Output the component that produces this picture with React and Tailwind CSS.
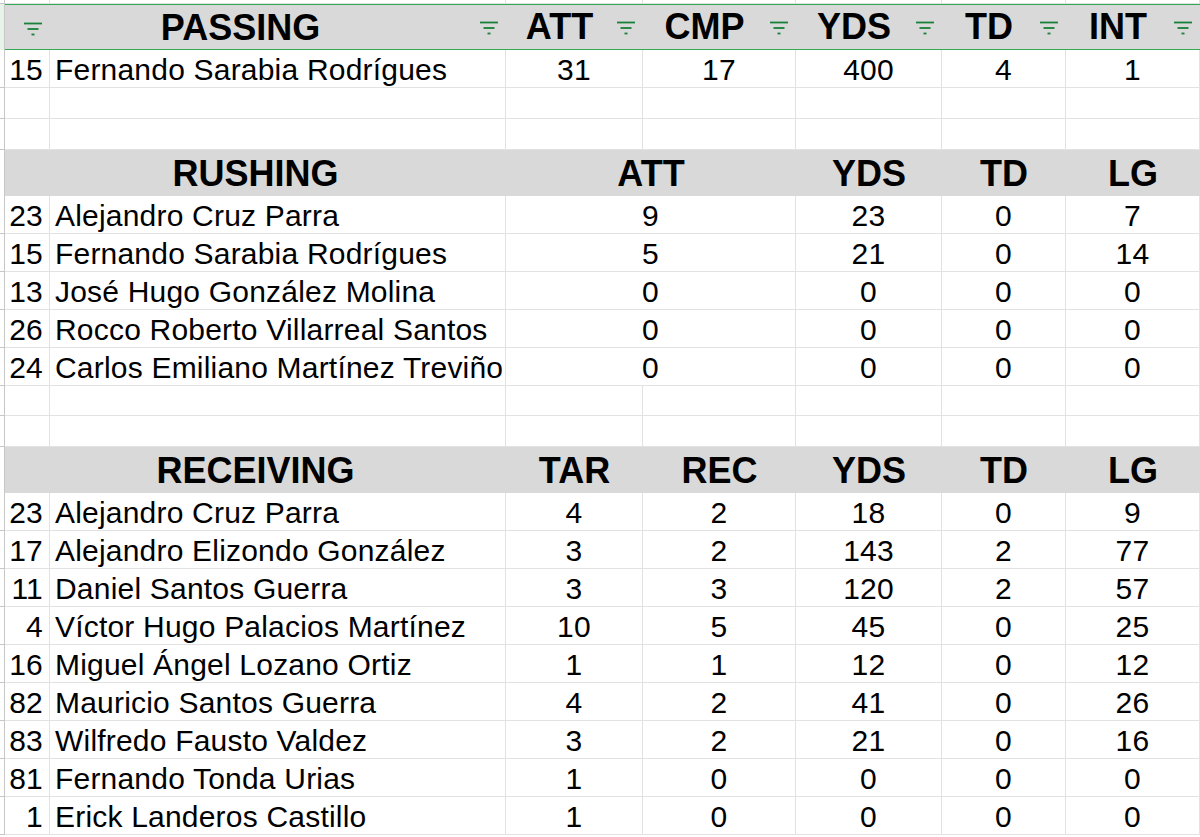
import React from "react";

const grid = "grid grid-cols-[5px_45px_456px_137px_153px_146px_124px_134px]";

const passing = [{ num: 15, name: "Fernando Sarabia Rodrígues", stats: [31, 17, 400, 4, 1] }];

const rushing = [
  { num: 23, name: "Alejandro Cruz Parra", stats: [9, 23, 0, 7] },
  { num: 15, name: "Fernando Sarabia Rodrígues", stats: [5, 21, 0, 14] },
  { num: 13, name: "José Hugo González Molina", stats: [0, 0, 0, 0] },
  { num: 26, name: "Rocco Roberto Villarreal Santos", stats: [0, 0, 0, 0] },
  { num: 24, name: "Carlos Emiliano Martínez Treviño", stats: [0, 0, 0, 0] },
];

const receiving = [
  { num: 23, name: "Alejandro Cruz Parra", stats: [4, 2, 18, 0, 9] },
  { num: 17, name: "Alejandro Elizondo González", stats: [3, 2, 143, 2, 77] },
  { num: 11, name: "Daniel Santos Guerra", stats: [3, 3, 120, 2, 57] },
  { num: 4, name: "Víctor Hugo Palacios Martínez", stats: [10, 5, 45, 0, 25] },
  { num: 16, name: "Miguel Ángel Lozano Ortiz", stats: [1, 1, 12, 0, 12] },
  { num: 82, name: "Mauricio Santos Guerra", stats: [4, 2, 41, 0, 26] },
  { num: 83, name: "Wilfredo Fausto Valdez", stats: [3, 2, 21, 0, 16] },
  { num: 81, name: "Fernando Tonda Urias", stats: [1, 0, 0, 0, 0] },
  { num: 1, name: "Erick Landeros Castillo", stats: [1, 0, 0, 0, 0] },
];

function FilterIcon() {
  return (
    <svg width="20" height="14" viewBox="0 0 20 14" className="shrink-0">
      <line x1="1" y1="1.5" x2="19" y2="1.5" stroke="#188038" strokeWidth="1.8" />
      <line x1="4.5" y1="7" x2="15.5" y2="7" stroke="#188038" strokeWidth="1.8" />
      <line x1="8.5" y1="12.5" x2="11.5" y2="12.5" stroke="#188038" strokeWidth="1.8" />
    </svg>
  );
}

const cell = "border-r border-b border-[#e2e2e2]";
const stub = "border-r border-b border-[#c7c7c7]";

function BlankRow({ h = "h-[31px]" }) {
  return (
    <div className={`${grid} ${h}`}>
      <div className={stub} />
      <div className={cell} />
      <div className={cell} />
      <div className={cell} />
      <div className={cell} />
      <div className={cell} />
      <div className={cell} />
      <div className={cell} />
    </div>
  );
}

function DataRow({ num, name, stats, merged }) {
  return (
    <div className={`${grid} h-[38px] text-[30px] leading-[34px] tracking-[0.2px]`}>
      <div className={stub} />
      <div className={`${cell} flex items-end justify-end pr-[6px]`}>{num}</div>
      <div className={`${cell} flex items-end pl-[5px] whitespace-nowrap`}>{name}</div>
      {stats.map((v, i) => (
        <div
          key={i}
          className={`${cell} flex items-end justify-center ${merged && i === 0 ? "col-span-2" : ""}`}
        >
          {v}
        </div>
      ))}
    </div>
  );
}

function FilterHead({ label }) {
  return (
    <div className="flex items-center border-t border-b border-[#34a853]">
      <span className="flex-1 text-center">{label}</span>
      <span className="w-[30px] pl-[3px] flex items-center mt-[2px]">
        <FilterIcon />
      </span>
    </div>
  );
}

function PlainHead({ labels, merged }) {
  return (
    <div className={`${grid} h-[46px] text-[36px] font-bold leading-[44px]`}>
      <div className="border-r border-[#c7c7c7]" />
      {labels.map((l, i) => (
        <div
          key={l + i}
          className={`bg-[#d9d9d9] flex items-center justify-center pt-[2px] ${i === 0 || (merged && i === 1) ? "col-span-2" : ""}`}
        >
          {l}
        </div>
      ))}
    </div>
  );
}

export default function App() {
  return (
    <main className="w-[1200px] h-[837px] overflow-hidden bg-white text-black font-['Liberation_Sans',Arial,sans-serif]">
      <BlankRow h="h-[4px]" />

      {/* Passing, filtered header */}
      <div className={`${grid} h-[46px] text-[36px] font-bold leading-[42px] bg-[#d9d9d9]`}>
        <div className="bg-[#e6f4ea] border-r border-[#c7c7c7]" />
        <div className="col-span-2 relative flex items-center border-t border-b border-[#34a853]">
          <span className="absolute left-[18px] top-1/2 -translate-y-1/2 mt-[2px] flex">
            <FilterIcon />
          </span>
          <span className="flex-1 text-center pt-[2px]">PASSING</span>
          <span className="w-[30px] pl-[3px] flex items-center mt-[2px]">
            <FilterIcon />
          </span>
        </div>
        <FilterHead label="ATT" />
        <FilterHead label="CMP" />
        <FilterHead label="YDS" />
        <FilterHead label="TD" />
        <FilterHead label="INT" />
      </div>
      {passing.map((p) => (
        <DataRow key={p.name} {...p} />
      ))}
      <BlankRow />
      <BlankRow />

      {/* Rushing */}
      <PlainHead labels={["RUSHING", "ATT", "YDS", "TD", "LG"]} merged />
      {rushing.map((p) => (
        <DataRow key={p.name} {...p} merged />
      ))}
      <BlankRow h="h-[30px]" />
      <BlankRow />

      {/* Receiving */}
      <PlainHead labels={["RECEIVING", "TAR", "REC", "YDS", "TD", "LG"]} />
      {receiving.map((p) => (
        <DataRow key={p.name} {...p} />
      ))}
    </main>
  );
}
